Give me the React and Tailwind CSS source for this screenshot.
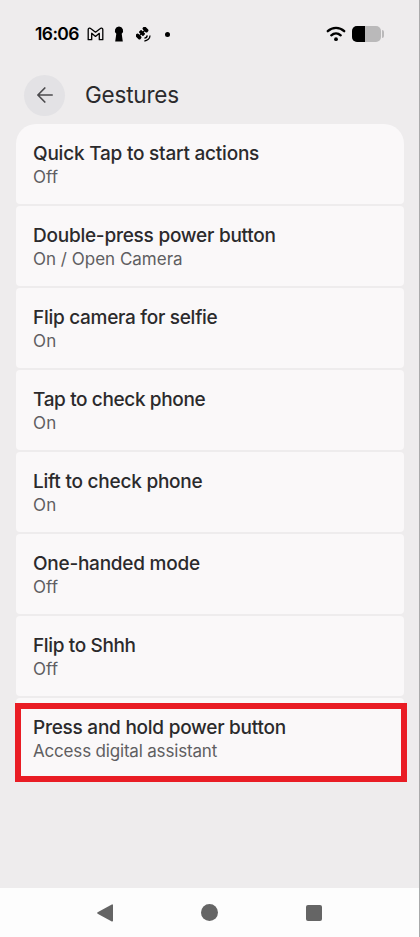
const settings = [
  { title: 'Quick Tap to start actions', status: 'Off', titleCls: 'tracking-[-0.22px]', statusCls: '' },
  { title: 'Double-press power button', status: 'On / Open Camera', titleCls: 'tracking-[-0.24px]', statusCls: '' },
  { title: 'Flip camera for selfie', status: 'On', titleCls: 'tracking-[-0.28px]', statusCls: 'tracking-[0.3px]' },
  { title: 'Tap to check phone', status: 'On', titleCls: 'tracking-[-0.37px]', statusCls: 'tracking-[0.3px]' },
  { title: 'Lift to check phone', status: 'On', titleCls: 'tracking-[-0.23px]', statusCls: 'tracking-[0.3px]' },
  { title: 'One-handed mode', status: 'Off', titleCls: 'tracking-[-0.25px]', statusCls: '' },
  { title: 'Flip to Shhh', status: 'Off', titleCls: 'tracking-[-0.36px]', statusCls: '' },
  { title: 'Press and hold power button', status: 'Access digital assistant', titleCls: 'tracking-[-0.25px]', statusCls: 'tracking-[-0.18px]' },
];

function StatusBar() {
  return (
    <div className="flex h-[67px] items-center pl-[35px] pr-[35px] pt-[1px] text-black">
      <span className="w-[44px] whitespace-nowrap text-[17.5px] font-semibold leading-6 tracking-[-0.6px]">16:06</span>
      <svg className="ml-[8px] h-[14px] w-[17px]" viewBox="0 0 17 14" fill="none" stroke="currentColor" strokeWidth="1.3" strokeLinejoin="round">
        <path d="M1.2 2.6C1.2 1 3 .8 4 1.7L8.5 5.2 13 1.7c1-.9 2.8-.7 2.8.9v10.1h-3.5V6.3L8.5 9.4 4.7 6.3v6.4H1.2z" />
      </svg>
      <svg className="ml-[10px] h-[16px] w-[10px]" viewBox="0 0 10 16" fill="currentColor">
        <path d="M5 .5a4.1 4.1 0 0 0-2.7 7.2L1.2 15.5h7.6L7.7 7.7A4.1 4.1 0 0 0 5 .5z" />
      </svg>
      <svg className="ml-[12px] h-[15px] w-[15px]" viewBox="0 0 15 15" fill="currentColor">
        <g transform="rotate(-45 6 6)">
          <rect x="-.8" y="2.8" width="3.7" height="6.4" rx="1.6" />
          <rect x="9.1" y="2.8" width="3.7" height="6.4" rx="1.6" />
          <rect x="4.3" y="3" width="3.4" height="6" rx=".8" />
          <rect x="2" y="5.4" width="8" height="1.3" />
        </g>
        <path d="M8.4 11.2a3 3 0 0 0 2.8-2.8M8.4 14a5.7 5.7 0 0 0 5.6-5.6" fill="none" stroke="currentColor" strokeWidth="1.3" />
      </svg>
      <span className="ml-[14px] h-[5px] w-[5px] rounded-full bg-black" />
      <svg className="ml-auto h-[16px] w-[20px]" viewBox="0 0 20 16" fill="none" stroke="currentColor" strokeWidth="2.4" strokeLinecap="round">
        <path d="M1.8 5.2C6.4.7 13.6.7 18.2 5.2M5.3 9.3c2.7-2.4 6.7-2.4 9.4 0" />
        <circle cx="10" cy="13.2" r="1.9" fill="currentColor" stroke="none" />
      </svg>
      <div className="ml-[6px] flex items-center">
        <div className="flex h-4 w-[29px] overflow-hidden rounded-[5px] bg-[#bab9ba]">
          <div className="w-[13px] bg-black" />
        </div>
        <div className="ml-[1px] h-[8px] w-[2px] rounded-r-full bg-[#bab9ba]" />
      </div>
    </div>
  );
}

export default function App() {
  return (
    <div className="flex h-[937px] w-[420px] flex-col overflow-hidden border-r border-[#a9a9aa] bg-[#eeeced] font-['Inter',sans-serif]">
      <StatusBar />
      <header className="flex h-[57px] items-center pb-[1px] pl-[24px]">
        <button className="flex h-[41px] w-[41px] items-center justify-center rounded-full bg-[#e3e2e5]">
          <svg className="h-[16px] w-[16px]" viewBox="0 0 16 16" fill="none" stroke="#4c4b4e" strokeWidth="1.7" strokeLinecap="round" strokeLinejoin="round">
            <path d="M15.2 8H1M7.8 1 .9 8l6.9 7" />
          </svg>
        </button>
        <h1 className="ml-[20px] text-[22.5px] leading-7 tracking-[-0.2px] text-[#2b2a2c]">Gestures</h1>
      </header>
      <main className="relative ml-[16px] flex w-[387.5px] flex-col gap-[2px]">
        {settings.map((s) => (
          <section
            key={s.title}
            className="h-[80px] rounded-[4px] bg-[#faf8f9] pl-[17px] pt-[18px] first:rounded-t-[20px] last:rounded-b-[20px]"
          >
            <h2 className={`whitespace-nowrap text-[19px] font-medium leading-6 text-[#2b2a2c] ${s.titleCls}`}>{s.title}</h2>
            <p className={`whitespace-nowrap text-[17px] leading-[23px] text-[#5f5e61] ${s.statusCls}`}>{s.status}</p>
          </section>
        ))}
        <div className="absolute -left-[1px] top-[579px] h-[79px] w-[392px] border-[6px] border-[#e91c24]" />
      </main>
      <nav className="mt-auto flex h-[49px] items-center bg-[#fdfdfd] pl-[97px] text-[#656565]">
        <svg className="h-[18px] w-[16px]" viewBox="0 0 16 18" fill="currentColor" stroke="currentColor" strokeWidth="1.6" strokeLinejoin="round">
          <path d="M15.2 1.2v15.6L1 9z" />
        </svg>
        <span className="ml-[88px] h-[17px] w-[17px] rounded-full bg-current" />
        <span className="ml-[88px] h-4 w-4 rounded-[2px] bg-current" />
      </nav>
    </div>
  );
}
